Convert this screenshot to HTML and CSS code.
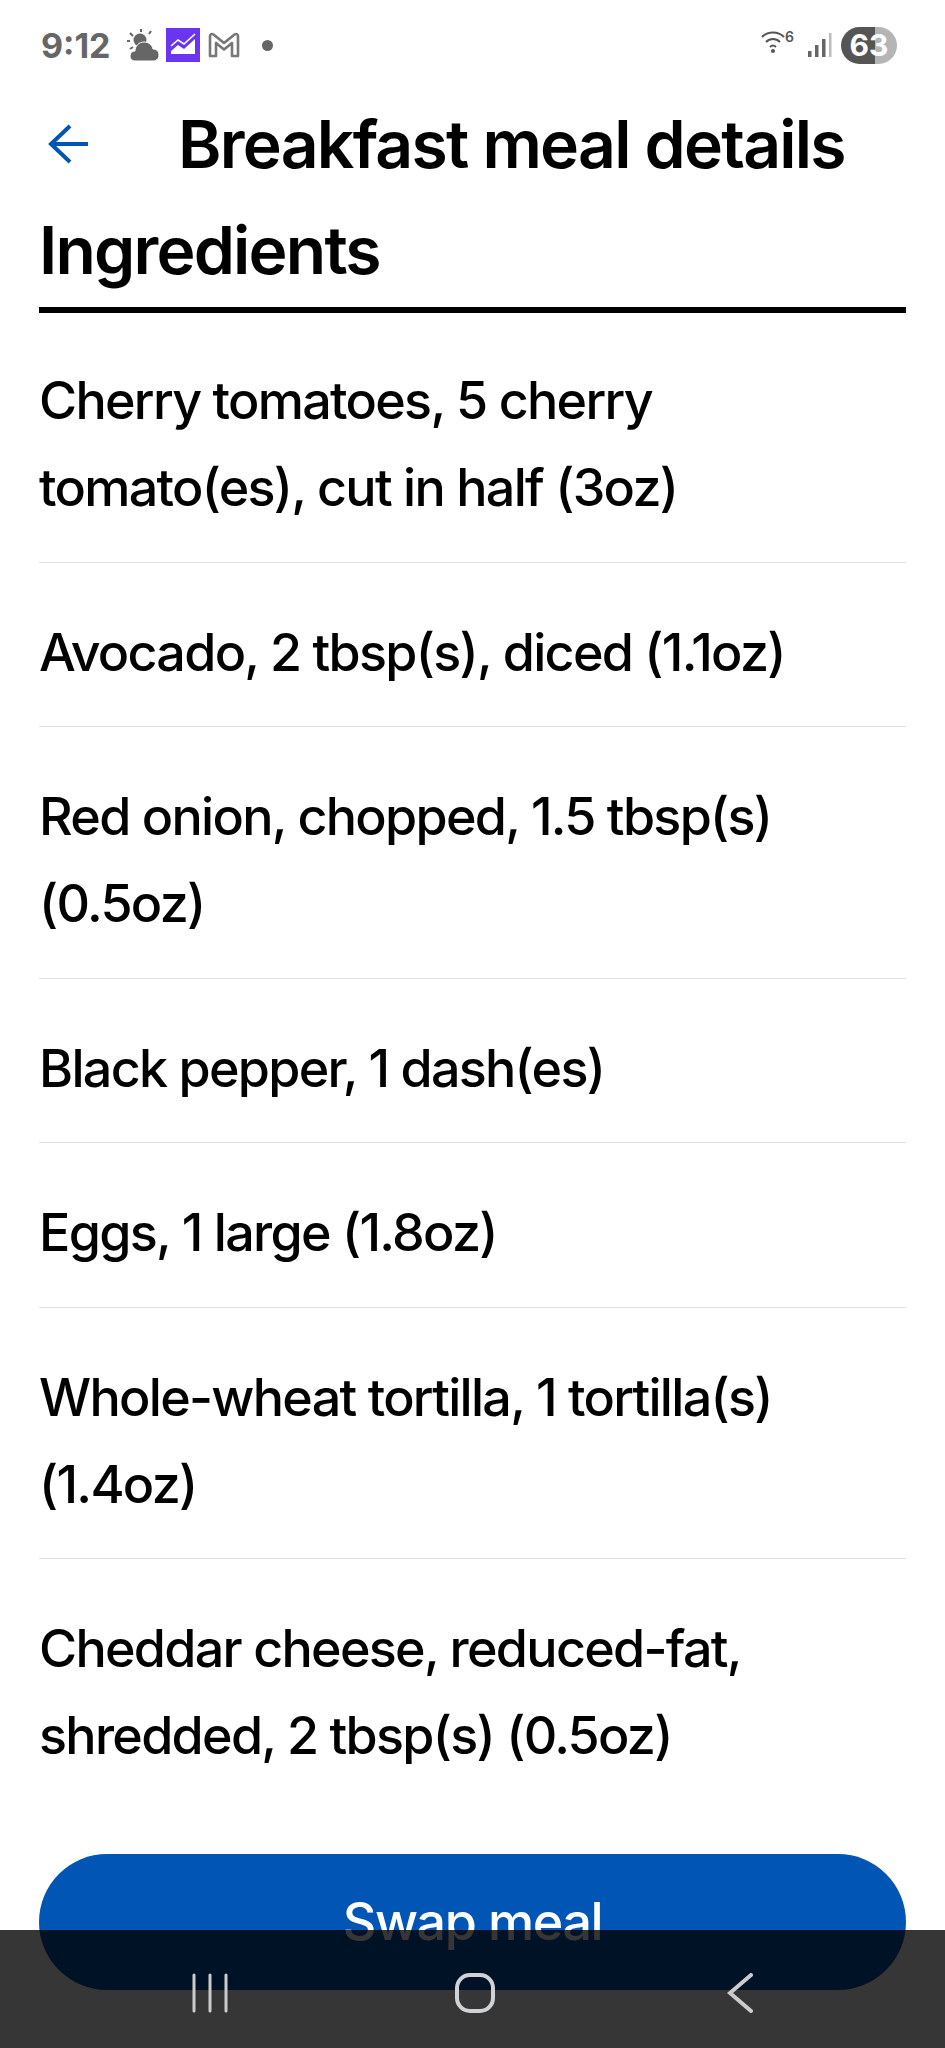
FILE: index.html
```html
<!doctype html>
<html lang="en">

<head>
    <meta charset="UTF-8">
    <title>Breakfast meal details</title>
    <link rel="stylesheet" href="styles.css">
</head>

<body>
    <div class="phone">
        <div class="status-bar">
            <div class="status-left">
                <span class="time">9:12</span>
                <svg class="weather" width="32" height="32" viewBox="0 0 32 32">
                    <circle cx="13" cy="11" r="6.500" fill="#666"/>
                    <path d="M14 0v3M24 2l-2 3M3 4l3 3M0 12h3M3 20l3-2" stroke="#666" stroke-width="2" fill="none"/>
                    <path d="M9 32c-4 0-6-2-6-5s2-5 5-5c0-5 4-9 9-9 5 0 8 3 9 7 3 0 6 2 6 6s-3 6-6 6z" fill="#666" stroke="#fff" stroke-width="1"/>
                </svg>
                <svg class="app-chart" width="34" height="34" viewBox="0 0 34 34">
                    <rect width="34" height="34" fill="#6a35f0"/>
                    <path d="M5 26v-3l7-6 6 4 11-10v15z" fill="#fff"/>
                    <path d="M5 18l7-6 6 4 11-10" stroke="#fff" stroke-width="1.600" fill="none"/>
                </svg>
                <svg class="gmail" width="32" height="26" viewBox="0 0 32 26">
                    <path d="M2 24V4c0-2 2-2.500 3.500-1.500L16 11 26.500 2.500C28 1.500 30 2 30 4v20h-6V11l-8 6.500L8 11v13z" fill="none" stroke="#777" stroke-width="2.600" stroke-linejoin="round"/>
                </svg>
                <span class="dot"></span>
            </div>
            <div class="status-right">
                <div class="wifi">
                    <svg width="24" height="24" viewBox="0 0 24 24">
                        <path d="M1 7c6-6 16-6 22 0M5 12c4-4 10-4 14 0M9 17c2-2 4-2 6 0" stroke="#555" stroke-width="2" fill="none"/>
                        <circle cx="12" cy="21" r="2" fill="#555"/>
                    </svg>
                    <span class="wifi-six">6</span>
                </div>
                <svg class="signal" width="25" height="25" viewBox="0 0 25 25">
                    <rect x="0" y="18" width="3.500" height="6" fill="#666"/>
                    <rect x="7" y="12" width="3.500" height="12" fill="#666"/>
                    <rect x="14" y="6" width="3.500" height="18" fill="#666"/>
                    <rect x="21" y="0" width="2.500" height="24" fill="#bbb"/>
                </svg>
                <span class="battery">63</span>
            </div>
        </div>

        <header class="top-bar">
            <svg class="back-arrow" width="40" height="40" viewBox="0 0 40 40">
                <path d="M41 20H3M22 2L3 20l19 18" stroke="#0055b5" stroke-width="4" fill="none"/>
            </svg>
            <h1>Breakfast meal details</h1>
        </header>

        <h2 class="section-title">Ingredients</h2>

        <ul class="ingredients">
            <li>Cherry tomatoes, 5 cherry tomato(es), cut in half (3oz)</li>
            <li>Avocado, 2 tbsp(s), diced (1.1oz)</li>
            <li>Red onion, chopped, 1.5 tbsp(s) (0.5oz)</li>
            <li>Black pepper, 1 dash(es)</li>
            <li>Eggs, 1 large (1.8oz)</li>
            <li>Whole-wheat tortilla, 1 tortilla(s) (1.4oz)</li>
            <li>Cheddar cheese, reduced-fat, shredded, 2 tbsp(s) (0.5oz)</li>
        </ul>

        <button class="swap-btn">Swap meal</button>

        <nav class="nav-bar">
            <svg width="36" height="40" viewBox="0 0 36 40">
                <path d="M2 2v36M18 2v36M34 2v36" stroke="#ccc" stroke-width="3" stroke-linecap="round"/>
            </svg>
            <svg class="nav-home" width="40" height="40" viewBox="0 0 40 40">
                <rect x="2" y="2" width="36" height="36" rx="13" fill="none" stroke="#d0d3d6" stroke-width="4"/>
            </svg>
            <svg width="26" height="40" viewBox="0 0 26 40">
                <path d="M24 2L3 20l21 18" fill="none" stroke="#ccc" stroke-width="4" stroke-linecap="round"/>
            </svg>
        </nav>
    </div>
</body>

</html>
```

FILE: styles.css
```css
* {
    box-sizing: border-box;
}

body {
    margin: 0;
    background: #fff;
    font-family: 'Inter', sans-serif;
    color: #000;
}

.phone {
    position: relative;
    width: 945px;
    height: 2048px;
    overflow: hidden;
    padding: 0 39px;
}

.status-bar {
    display: flex;
    justify-content: space-between;
    align-items: center;
    height: 90px;
    padding: 0 9px 0 2px;
}

.status-left,
.status-right {
    display: flex;
    align-items: center;
}

.time {
    font-size: 34px;
    font-weight: 700;
    color: #666;
    margin-right: 16px;
}

.weather {
    margin-right: 7px;
}

.app-chart {
    margin-right: 8px;
}

.dot {
    width: 11px;
    height: 11px;
    border-radius: 50%;
    background: #666;
    margin-left: 22px;
}

.wifi {
    display: flex;
    align-items: flex-start;
    width: 33px;
    height: 24px;
    margin-bottom: 6px;
}

.wifi-six {
    font-size: 14px;
    line-height: 14px;
    font-weight: 600;
    color: #555;
}

.signal {
    margin: 0 8px 0 14px;
}

.battery {
    width: 56px;
    height: 37px;
    border-radius: 19px;
    background: linear-gradient(to right, #555 61%, #b5b5b5 61%);
    color: #fff;
    font-size: 30px;
    font-weight: 700;
    text-align: center;
    line-height: 37px;
}

.top-bar {
    display: flex;
    align-items: center;
    height: 108px;
}

.back-arrow {
    margin-left: 9px;
}

.top-bar h1 {
    margin: 0 0 0 90px;
    font-size: 66px;
    font-weight: 600;
    letter-spacing: -1.75px;
    white-space: nowrap;
}

.section-title {
    margin: 0;
    height: 115px;
    padding-top: 12px;
    font-size: 66px;
    line-height: 80px;
    font-weight: 600;
    letter-spacing: -1.8px;
    border-bottom: 6px solid #000;
}

.ingredients {
    list-style: none;
    margin: 0;
    padding: 0;
}

.ingredients li {
    font-size: 52px;
    font-weight: 550;
    letter-spacing: -1.7px;
    line-height: 87px;
    padding: 46px 0 30.5px;
    border-bottom: 1px solid #e0e0e0;
}

.ingredients li:first-child {
    padding-top: 44px;
}

.ingredients li:last-child {
    border-bottom: none;
}

.swap-btn {
    display: block;
    width: 100%;
    height: 136px;
    margin-top: 44px;
    border: none;
    border-radius: 68px;
    background: #0055b5;
    color: #fff;
    font-family: 'Inter', sans-serif;
    font-size: 52px;
    font-weight: 550;
    letter-spacing: -1.4px;
}

.nav-bar {
    position: absolute;
    left: 0;
    top: 1930px;
    width: 945px;
    height: 118px;
    background: rgba(0, 0, 0, 0.79);
    display: flex;
    justify-content: space-between;
    align-items: flex-start;
    padding: 43px 192px 0;
}

.nav-home {
    margin-right: 5px;
}
```
